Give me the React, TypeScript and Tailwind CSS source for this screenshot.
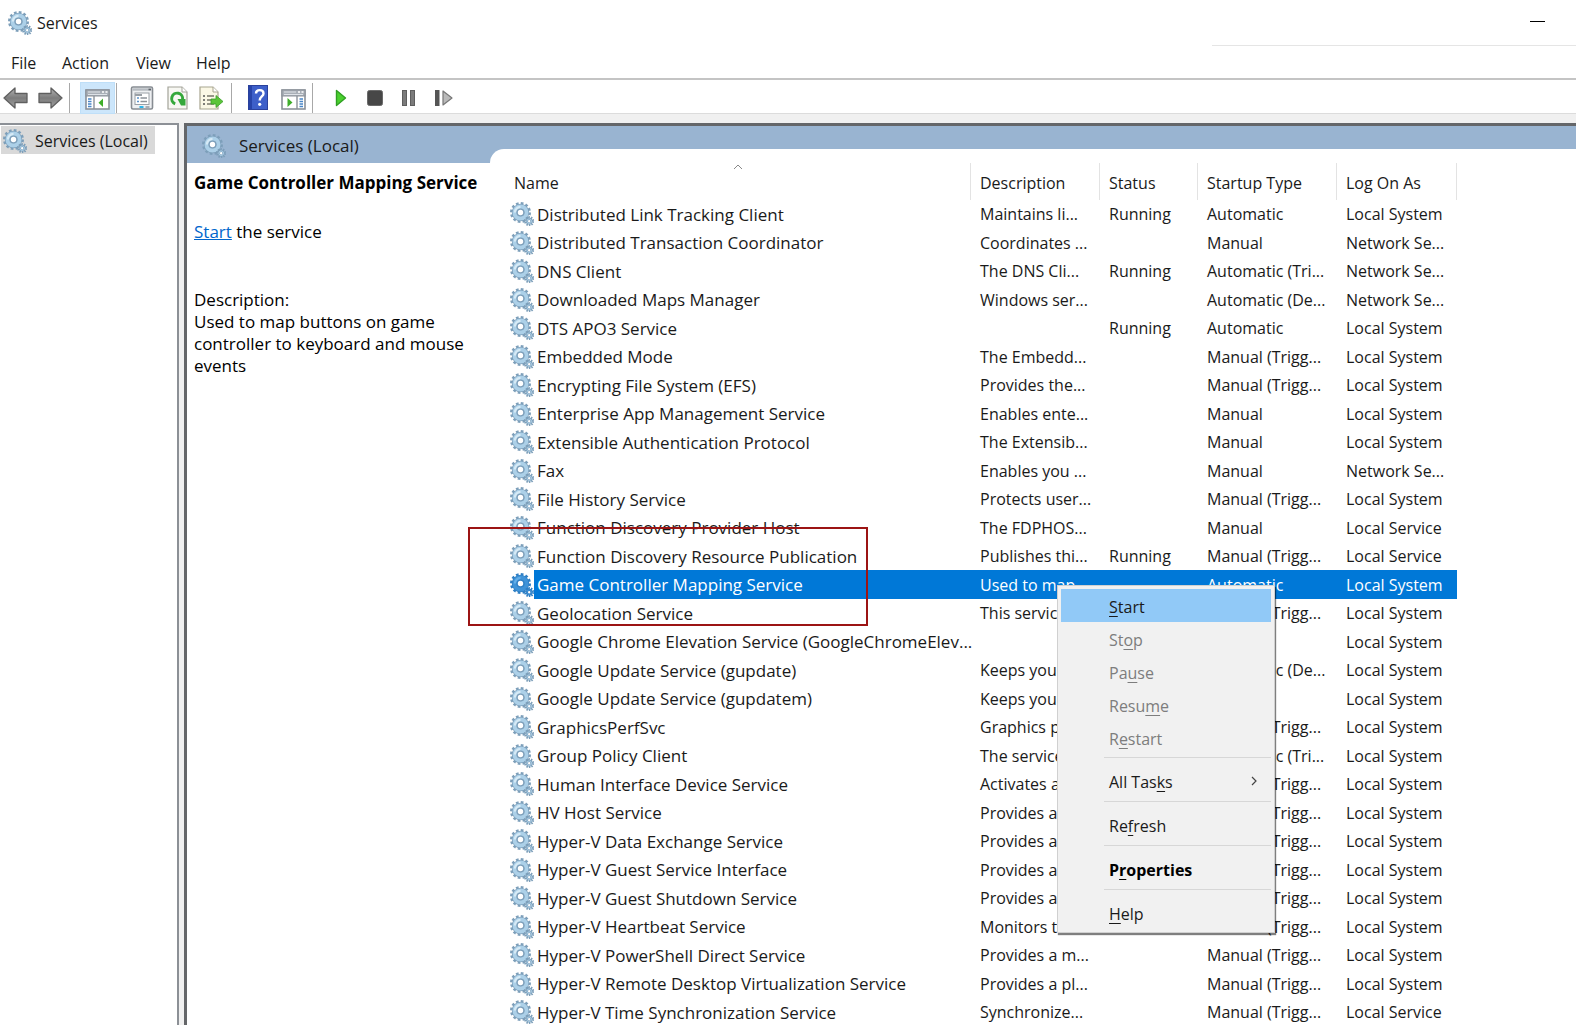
import clsx from "clsx";

type Service = [name: string, description: string, status: string, startup: string, logOn: string];

const SERVICES: Service[] = [
  ["Distributed Link Tracking Client", "Maintains li...", "Running", "Automatic", "Local System"],
  ["Distributed Transaction Coordinator", "Coordinates ...", "", "Manual", "Network Se..."],
  ["DNS Client", "The DNS Cli...", "Running", "Automatic (Tri...", "Network Se..."],
  ["Downloaded Maps Manager", "Windows ser...", "", "Automatic (De...", "Network Se..."],
  ["DTS APO3 Service", "", "Running", "Automatic", "Local System"],
  ["Embedded Mode", "The Embedd...", "", "Manual (Trigg...", "Local System"],
  ["Encrypting File System (EFS)", "Provides the...", "", "Manual (Trigg...", "Local System"],
  ["Enterprise App Management Service", "Enables ente...", "", "Manual", "Local System"],
  ["Extensible Authentication Protocol", "The Extensib...", "", "Manual", "Local System"],
  ["Fax", "Enables you ...", "", "Manual", "Network Se..."],
  ["File History Service", "Protects user...", "", "Manual (Trigg...", "Local System"],
  ["Function Discovery Provider Host", "The FDPHOS...", "", "Manual", "Local Service"],
  ["Function Discovery Resource Publication", "Publishes thi...", "Running", "Manual (Trigg...", "Local Service"],
  ["Game Controller Mapping Service", "Used to map...", "", "Automatic", "Local System"],
  ["Geolocation Service", "This service ...", "", "Manual (Trigg...", "Local System"],
  ["Google Chrome Elevation Service (GoogleChromeElev...", "", "", "Manual", "Local System"],
  ["Google Update Service (gupdate)", "Keeps your ...", "", "Automatic (De...", "Local System"],
  ["Google Update Service (gupdatem)", "Keeps your ...", "", "Manual", "Local System"],
  ["GraphicsPerfSvc", "Graphics per...", "", "Manual (Trigg...", "Local System"],
  ["Group Policy Client", "The service i...", "", "Automatic (Tri...", "Local System"],
  ["Human Interface Device Service", "Activates an...", "", "Manual (Trigg...", "Local System"],
  ["HV Host Service", "Provides an i...", "", "Manual (Trigg...", "Local System"],
  ["Hyper-V Data Exchange Service", "Provides a m...", "", "Manual (Trigg...", "Local System"],
  ["Hyper-V Guest Service Interface", "Provides an i...", "", "Manual (Trigg...", "Local System"],
  ["Hyper-V Guest Shutdown Service", "Provides a m...", "", "Manual (Trigg...", "Local System"],
  ["Hyper-V Heartbeat Service", "Monitors th...", "", "Manual (Trigg...", "Local System"],
  ["Hyper-V PowerShell Direct Service", "Provides a m...", "", "Manual (Trigg...", "Local System"],
  ["Hyper-V Remote Desktop Virtualization Service", "Provides a pl...", "", "Manual (Trigg...", "Local System"],
  ["Hyper-V Time Synchronization Service", "Synchronize...", "", "Manual (Trigg...", "Local Service"],
];

const SELECTED = "Game Controller Mapping Service";

function GearIcon({ selected = false }: { selected?: boolean }) {
  const edge = selected ? "#2f7fc4" : "#7d9fba";
  const body = selected ? "#3f93d8" : "#acd0e8";
  const shine = selected ? "#63aee8" : "#d6eaf6";
  return (
    <svg viewBox="0 0 24 24" className="h-6 w-6 shrink-0" aria-hidden="true">
      <circle cx="10.5" cy="10.5" r="9" fill="none" stroke={edge} strokeWidth="3" strokeDasharray="2.6 2.112" />
      <circle cx="10.5" cy="10.5" r="6" fill="none" stroke={edge} strokeWidth="5.4" />
      <circle cx="10.5" cy="10.5" r="5.9" fill="none" stroke={body} strokeWidth="4.2" />
      <path d="M5 10.5A5.5 5.5 0 0 1 10.5 5" fill="none" stroke={shine} strokeWidth="2.4" />
      <circle cx="10.5" cy="10.5" r="3.4" fill="#fff" stroke={edge} strokeWidth="1.4" />
      <circle cx="19.2" cy="19.2" r="4" fill="none" stroke={edge} strokeWidth="2.2" strokeDasharray="1.4 1.113" />
      <circle cx="19.2" cy="19.2" r="2.3" fill="#fff" stroke={edge} strokeWidth="2.2" />
      <circle cx="19.2" cy="19.2" r="2.3" fill="none" stroke={body} strokeWidth="1" />
    </svg>
  );
}

function ArrowIcon({ forward = false }: { forward?: boolean }) {
  return (
    <svg viewBox="0 0 26 24" className="h-6 w-[26px]" aria-hidden="true">
      <defs>
        <linearGradient id="arrow" x1="0" y1="0" x2="0" y2="1">
          <stop offset="0" stopColor="#b4b4b4" />
          <stop offset="0.5" stopColor="#7c7c7c" />
          <stop offset="1" stopColor="#a2a2a2" />
        </linearGradient>
      </defs>
      <path
        d={forward ? "M25 12 14 2V7.5H2V16.5H14V22Z" : "M1 12 12 2V7.5H24V16.5H12V22Z"}
        fill="url(#arrow)"
        stroke="#5f5f5f"
        strokeWidth="1.3"
        strokeLinejoin="round"
      />
    </svg>
  );
}

function PaneIcon({ flipped = false }: { flipped?: boolean }) {
  return (
    <svg viewBox="0 0 25 21" className="h-[21px] w-[25px]" aria-hidden="true">
      <rect x="1" y="1" width="23" height="19" fill="#fff" stroke="#8b9199" strokeWidth="1.6" />
      <rect x="1" y="1" width="23" height="6" fill="#a9afb7" stroke="#8b9199" />
      <path d="M3 3H15M3 5.5H22" stroke="#dfe3e8" />
      <path d="M17 3H19M20.5 3H22.5" stroke="#fff" strokeWidth="1.4" />
      {flipped ? (
        <>
          <path d="M16 7V20" stroke="#8b9199" strokeWidth="1.4" />
          <path d="M18.5 10H22M18.5 12.5H22M18.5 15H22M18.5 17.5H22" stroke="#4a86c8" strokeWidth="1.4" />
          <path d="M6.5 9V18L11.5 13.5Z" fill="#3fae2a" />
        </>
      ) : (
        <>
          <path d="M9 7V20" stroke="#8b9199" strokeWidth="1.4" />
          <path d="M3 10H6.5M3 12.5H6.5M3 15H6.5M3 17.5H6.5" stroke="#4a86c8" strokeWidth="1.4" />
          <path d="M18 9.5V18L13.5 13.7Z" fill="#3fae2a" />
        </>
      )}
    </svg>
  );
}

function PropertiesIcon() {
  return (
    <svg viewBox="0 0 24 24" className="h-6 w-6" aria-hidden="true">
      <rect x="1.5" y="1" width="21" height="22" rx="1.5" fill="#eef0f2" stroke="#878c92" strokeWidth="1.6" />
      <path d="M2.5 3.5H21.5" stroke="#b6bbc1" strokeWidth="2.4" />
      <path d="M18.5 3.5H21" stroke="#5d6369" strokeWidth="1.6" />
      <rect x="5" y="7" width="14" height="11.5" fill="#fff" stroke="#9aa0a6" />
      <path d="M5 9H12" stroke="#9aa0a6" strokeWidth="2" />
      <path d="M7 12H9M7 15.5H9" stroke="#5b93cc" strokeWidth="1.5" />
      <path d="M10.5 12H17M10.5 15.5H17" stroke="#8d9399" strokeWidth="1.3" />
      <path d="M9.5 21H13.5" stroke="#2bb5ea" strokeWidth="2" />
      <path d="M15.5 21H19.5" stroke="#a9aeb4" strokeWidth="2" />
    </svg>
  );
}

function RefreshIcon() {
  return (
    <svg viewBox="0 0 21 24" className="h-6 w-[21px]" aria-hidden="true">
      <path d="M1 1H15L20 6V23H1Z" fill="#f8f8f3" stroke="#a3a399" strokeWidth="1.2" />
      <path d="M15 1V6H20" fill="#fff" stroke="#a3a399" />
      <path d="M8.2 17.8A5.5 5.5 0 1 1 15.6 13.5" fill="none" stroke="#35a83b" strokeWidth="3" />
      <path d="M10.5 13H18.5V19.5H14Z" fill="#35a83b" />
    </svg>
  );
}

function ExportIcon() {
  return (
    <svg viewBox="0 0 25 24" className="h-6 w-[25px]" aria-hidden="true">
      <path d="M1 1H14L19 6V23H1Z" fill="#fbf8e6" stroke="#a8a58f" strokeWidth="1.2" />
      <path d="M14 1V6H19" fill="#fff" stroke="#a8a58f" />
      <path d="M4 10H6M4 14H6M4 18H6" stroke="#555" strokeWidth="1.6" />
      <path d="M8 10H15M8 14H13M8 18H15" stroke="#77756a" strokeWidth="1.4" />
      <path d="M12 13H17V9.5L24 15.5 17 21.5V18H12Z" fill="#5cc53a" stroke="#3a9f28" strokeWidth="0.8" />
    </svg>
  );
}

function HelpIcon() {
  return (
    <svg viewBox="0 0 20 25" className="h-[25px] w-5" aria-hidden="true">
      <rect x="0.5" y="0.5" width="19" height="24" fill="#3d5fc9" stroke="#2a419c" />
      <path d="M2.5 1V24" stroke="#2743a8" strokeWidth="3" />
      <path
        d="M8 8.5C8 4 15.5 4 15.5 8.5C15.5 11.5 11.7 11.5 11.7 15.5"
        fill="none"
        stroke="#fff"
        strokeWidth="2.4"
      />
      <circle cx="11.7" cy="19.3" r="1.6" fill="#fff" />
    </svg>
  );
}

function PlayIcon() {
  return (
    <svg viewBox="0 0 12 18" className="h-[18px] w-3" aria-hidden="true">
      <path d="M1.5 1.5V16.5L10.5 9Z" fill="#4bd02f" stroke="#2f9f22" strokeWidth="1.4" strokeLinejoin="round" />
    </svg>
  );
}

function StopIcon() {
  return (
    <svg viewBox="0 0 16 16" className="h-4 w-4" aria-hidden="true">
      <rect x="0.5" y="0.5" width="15" height="15" rx="2" fill="#474747" stroke="#6a6a6a" />
    </svg>
  );
}

function PauseIcon() {
  return (
    <svg viewBox="0 0 13 16" className="h-4 w-[13px]" aria-hidden="true">
      <rect x="0.5" y="0.5" width="4" height="15" fill="#7b7b7b" stroke="#5e5e5e" />
      <rect x="8.5" y="0.5" width="4" height="15" fill="#7b7b7b" stroke="#5e5e5e" />
    </svg>
  );
}

function RestartIcon() {
  return (
    <svg viewBox="0 0 18 16" className="h-4 w-[18px]" aria-hidden="true">
      <rect x="0.5" y="0.5" width="3.5" height="15" fill="#555" stroke="#555" />
      <path d="M8 1V15L17 8Z" fill="#b9b9b9" stroke="#777" strokeWidth="1.2" strokeLinejoin="round" />
    </svg>
  );
}

function Toolbar() {
  return (
    <div className="flex h-[34px] items-center border-b border-[#dcdcdc] bg-white pt-[2px]" role="toolbar">
      <button aria-label="Back" className="ml-[3px]">
        <ArrowIcon />
      </button>
      <button aria-label="Forward" className="ml-2">
        <ArrowIcon forward />
      </button>
      <span className="ml-[6px] h-[30px] w-px bg-[#a8a8a8]" />
      <button
        aria-label="Show or hide console tree"
        className="ml-[10px] flex h-8 w-[35px] items-end justify-center border border-[#bfdff8] bg-[#cce6fb] pb-[3px]"
      >
        <PaneIcon />
      </button>
      <span className="ml-px h-[30px] w-px bg-[#a8a8a8]" />
      <button aria-label="Properties" className="ml-[13px]">
        <PropertiesIcon />
      </button>
      <button aria-label="Refresh" className="ml-[13px]">
        <RefreshIcon />
      </button>
      <button aria-label="Export list" className="ml-[11px]">
        <ExportIcon />
      </button>
      <span className="ml-[7px] h-[30px] w-px bg-[#a8a8a8]" />
      <button aria-label="Help" className="ml-4">
        <HelpIcon />
      </button>
      <button aria-label="Show or hide action pane" className="ml-[13px] pt-[3px]">
        <PaneIcon flipped />
      </button>
      <span className="ml-[6px] h-[30px] w-px bg-[#a8a8a8]" />
      <button aria-label="Start service" className="ml-[22px]">
        <PlayIcon />
      </button>
      <button aria-label="Stop service" className="ml-5">
        <StopIcon />
      </button>
      <button aria-label="Pause service" className="ml-[19px]">
        <PauseIcon />
      </button>
      <button aria-label="Restart service" className="ml-5">
        <RestartIcon />
      </button>
    </div>
  );
}

function ServiceTable() {
  return (
    <table className="w-[947px] table-fixed border-separate border-spacing-0 text-left whitespace-nowrap">
      <colgroup>
        <col className="w-[461px]" />
        <col className="w-[129px]" />
        <col className="w-[98px]" />
        <col className="w-[139px]" />
        <col className="w-[120px]" />
      </colgroup>
      <thead>
        <tr className="h-[37px]">
          <th className="relative border-r border-[#e3e3e3] p-0 pt-[3px] pl-1 font-normal">
            Name
            <svg viewBox="0 0 10 6" className="absolute top-px left-[223px] h-[6px] w-[10px]" aria-hidden="true">
              <path d="M1 5 5 1 9 5" fill="none" stroke="#888" />
            </svg>
          </th>
          <th className="border-r border-[#e3e3e3] p-0 pt-[3px] pl-[9px] font-normal">Description</th>
          <th className="border-r border-[#e3e3e3] p-0 pt-[3px] pl-[9px] font-normal">Status</th>
          <th className="border-r border-[#e3e3e3] p-0 pt-[3px] pl-[9px] font-normal">Startup Type</th>
          <th className="border-r border-[#e3e3e3] p-0 pt-[3px] pl-[9px] font-normal">Log On As</th>
        </tr>
      </thead>
      <tbody>
        {SERVICES.map(([name, description, status, startup, logOn], i) => {
          const selected = name === SELECTED;
          const height = i % 2 ? "h-[29px]" : "h-[28px]";
          const cell = clsx("overflow-hidden p-0 pl-[9px]", selected && "bg-[#0078d7] text-white");
          return (
            <tr key={name} className={clsx(height, "leading-[28px]")} aria-selected={selected}>
              <td className="p-0 text-[17px]">
                <div className={clsx("flex items-center", height)}>
                  <GearIcon selected={selected} />
                  <span className={clsx("h-full flex-1 pl-[3px] leading-[29px]", selected && "bg-[#0078d7] text-white")}>
                    {name}
                  </span>
                </div>
              </td>
              <td className={cell}>{description}</td>
              <td className={cell}>{status}</td>
              <td className={cell}>{startup}</td>
              <td className={cell}>{logOn}</td>
            </tr>
          );
        })}
      </tbody>
    </table>
  );
}

interface MenuItemProps {
  before?: string;
  hot: string;
  after?: string;
  disabled?: boolean;
  active?: boolean;
  bold?: boolean;
  submenu?: boolean;
}

function MenuItem({ before, hot, after, disabled, active, bold, submenu }: MenuItemProps) {
  return (
    <button
      role="menuitem"
      disabled={disabled}
      className={clsx(
        "flex h-[33px] w-full items-center justify-between pt-1 pr-[14px] pl-12 text-left",
        active && "bg-[#91c9f7]",
        disabled && "text-[#7d7d7d]",
        bold && "font-bold text-black",
      )}
    >
      <span>
        {before}
        <span className="underline decoration-1 underline-offset-3">{hot}</span>
        {after}
      </span>
      {submenu && (
        <svg viewBox="0 0 6 10" className="mb-1 h-[10px] w-[6px]" aria-hidden="true">
          <path d="M1 1 5 5 1 9" fill="none" stroke="#444" strokeWidth="1.2" />
        </svg>
      )}
    </button>
  );
}

function ContextMenu() {
  return (
    <div
      role="menu"
      className="absolute top-[585px] left-[1057px] w-[218px] border border-[#d0d0d0] bg-[#f1f1f1] p-[3px] shadow-[1px_2px_1px_rgba(0,0,0,0.5)]"
    >
      <MenuItem hot="S" after="tart" active />
      <MenuItem before="St" hot="o" after="p" disabled />
      <MenuItem before="Pa" hot="u" after="se" disabled />
      <MenuItem before="Resu" hot="m" after="e" disabled />
      <MenuItem before="R" hot="e" after="start" disabled />
      <hr className="mt-[3px] mb-[6px] ml-[43px] border-[#d7d7d7]" />
      <MenuItem before="All Tas" hot="k" after="s" submenu />
      <hr className="mt-[4px] mb-[6px] ml-[43px] border-[#d7d7d7]" />
      <MenuItem before="Re" hot="f" after="resh" />
      <hr className="mt-[4px] mb-[6px] ml-[43px] border-[#d7d7d7]" />
      <MenuItem before="P" hot="r" after="operties" bold />
      <hr className="mt-[4px] mb-[6px] ml-[43px] border-[#d7d7d7]" />
      <MenuItem hot="H" after="elp" />
    </div>
  );
}

export default function App() {
  return (
    <div className="relative flex h-screen flex-col overflow-hidden bg-[#f0f0f0] font-['Open_Sans','Noto_Sans',sans-serif] text-[16px] leading-[23px] text-[#1a1a1a]">
      {/* Title bar */}
      <header className="flex h-[46px] justify-between bg-white">
        <div className="flex items-center gap-[5px] pl-2">
          <GearIcon />
          <h1>Services</h1>
        </div>
        <div className="flex w-[364px] justify-end border-b border-[#e5e5e5] pt-[21px] pr-[31px]">
          <button aria-label="Minimize" className="h-px w-[15px] bg-black" />
        </div>
      </header>

      {/* Menu bar */}
      <nav className="flex h-[34px] items-center border-b-2 border-[#c4c4c4] bg-white pt-[2px] pl-[11px]">
        <button className="w-[51px] text-left">File</button>
        <button className="w-[74px] text-left">Action</button>
        <button className="w-[60px] text-left">View</button>
        <button className="text-left">Help</button>
      </nav>

      <Toolbar />

      <div className="flex min-h-0 flex-1 gap-[5px] pt-[9px]">
        {/* Console tree */}
        <aside className="w-[179px] shrink-0 border-t-2 border-r-2 border-[#8c9096] bg-white pt-px">
          <a href="#services" className="ml-px flex h-7 w-[154px] items-center gap-2 bg-[#d9d9d9] pt-[2px] pl-[2px]">
            <GearIcon />
            Services (Local)
          </a>
        </aside>

        <main className="flex min-w-0 flex-1 border-t-3 border-l-3 border-[#646669] bg-[#99b4d1]">
          <section className="flex w-[303px] shrink-0 flex-col">
            <h2 className="flex h-[37px] items-center gap-[13px] pt-[2px] pl-[15px] text-[17px]">
              <GearIcon />
              Services (Local)
            </h2>
            <div className="flex-1 bg-white pr-2 pl-[7px] text-[17px] leading-[22px] text-black">
              <h3 className="mt-[9px] font-bold whitespace-nowrap">{SELECTED}</h3>
              <p className="mt-[27px]">
                <a href="#start" className="text-[#0066cc] underline">
                  Start
                </a>{" "}
                the service
              </p>
              <p className="mt-[46px]">Description:</p>
              <p>Used to map buttons on game controller to keyboard and mouse events</p>
            </div>
          </section>

          <section className="flex min-w-0 flex-1 flex-col pt-[23px]">
            <div className="min-h-0 flex-1 rounded-tl-[14px] bg-white pt-[14px] pl-5">
              <ServiceTable />
            </div>
          </section>
        </main>
      </div>

      {/* Highlight frame around the selected service */}
      <div className="pointer-events-none absolute top-[527px] left-[468px] h-[99px] w-[400px] border-2 border-[#9c1414]" />

      <ContextMenu />
    </div>
  );
}
